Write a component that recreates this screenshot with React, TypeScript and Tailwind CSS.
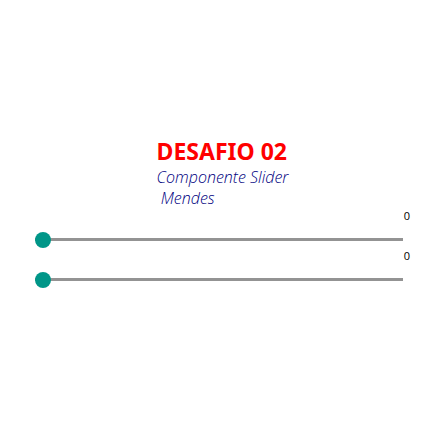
import { useState } from 'react';

type SliderProps = { label: string };

function Slider({ label }: SliderProps) {
  const [value, setValue] = useState(0);

  return (
    <label className="flex flex-col gap-2">
      <output className="self-end text-[11px] leading-[14px] text-black">{value}</output>
      <span className="flex pr-[7px]">
        <input
          type="range"
          min={0}
          max={100}
          value={value}
          aria-label={label}
          onChange={(event) => setValue(Number(event.target.value))}
          className="h-4 w-full cursor-pointer appearance-none bg-transparent [&::-webkit-slider-runnable-track]:h-[3px] [&::-webkit-slider-runnable-track]:bg-[#939393] [&::-webkit-slider-thumb]:-mt-1.5 [&::-webkit-slider-thumb]:size-4 [&::-webkit-slider-thumb]:appearance-none [&::-webkit-slider-thumb]:rounded-full [&::-webkit-slider-thumb]:bg-[#009688]"
        />
      </span>
    </label>
  );
}

export default function App() {
  return (
    <main className="flex min-h-screen flex-col justify-center bg-white pr-[22px] pb-[5px] pl-[35px] font-['Open_Sans','Noto_Sans',sans-serif]">
      <header className="flex flex-col items-center">
        <div>
          <h1 className="font-['Noto_Sans','Open_Sans',sans-serif] text-[23px] leading-8 font-bold text-[#ff0000]">
            DESAFIO 02
          </h1>
          <p className="text-base leading-[21px] font-[350] whitespace-pre text-[#000080] italic">
            {'Componente Slider\n Mendes'}
          </p>
        </div>
      </header>
      <section className="flex flex-col gap-0.5">
        <Slider label="Slider 1" />
        <Slider label="Slider 2" />
      </section>
    </main>
  );
}
